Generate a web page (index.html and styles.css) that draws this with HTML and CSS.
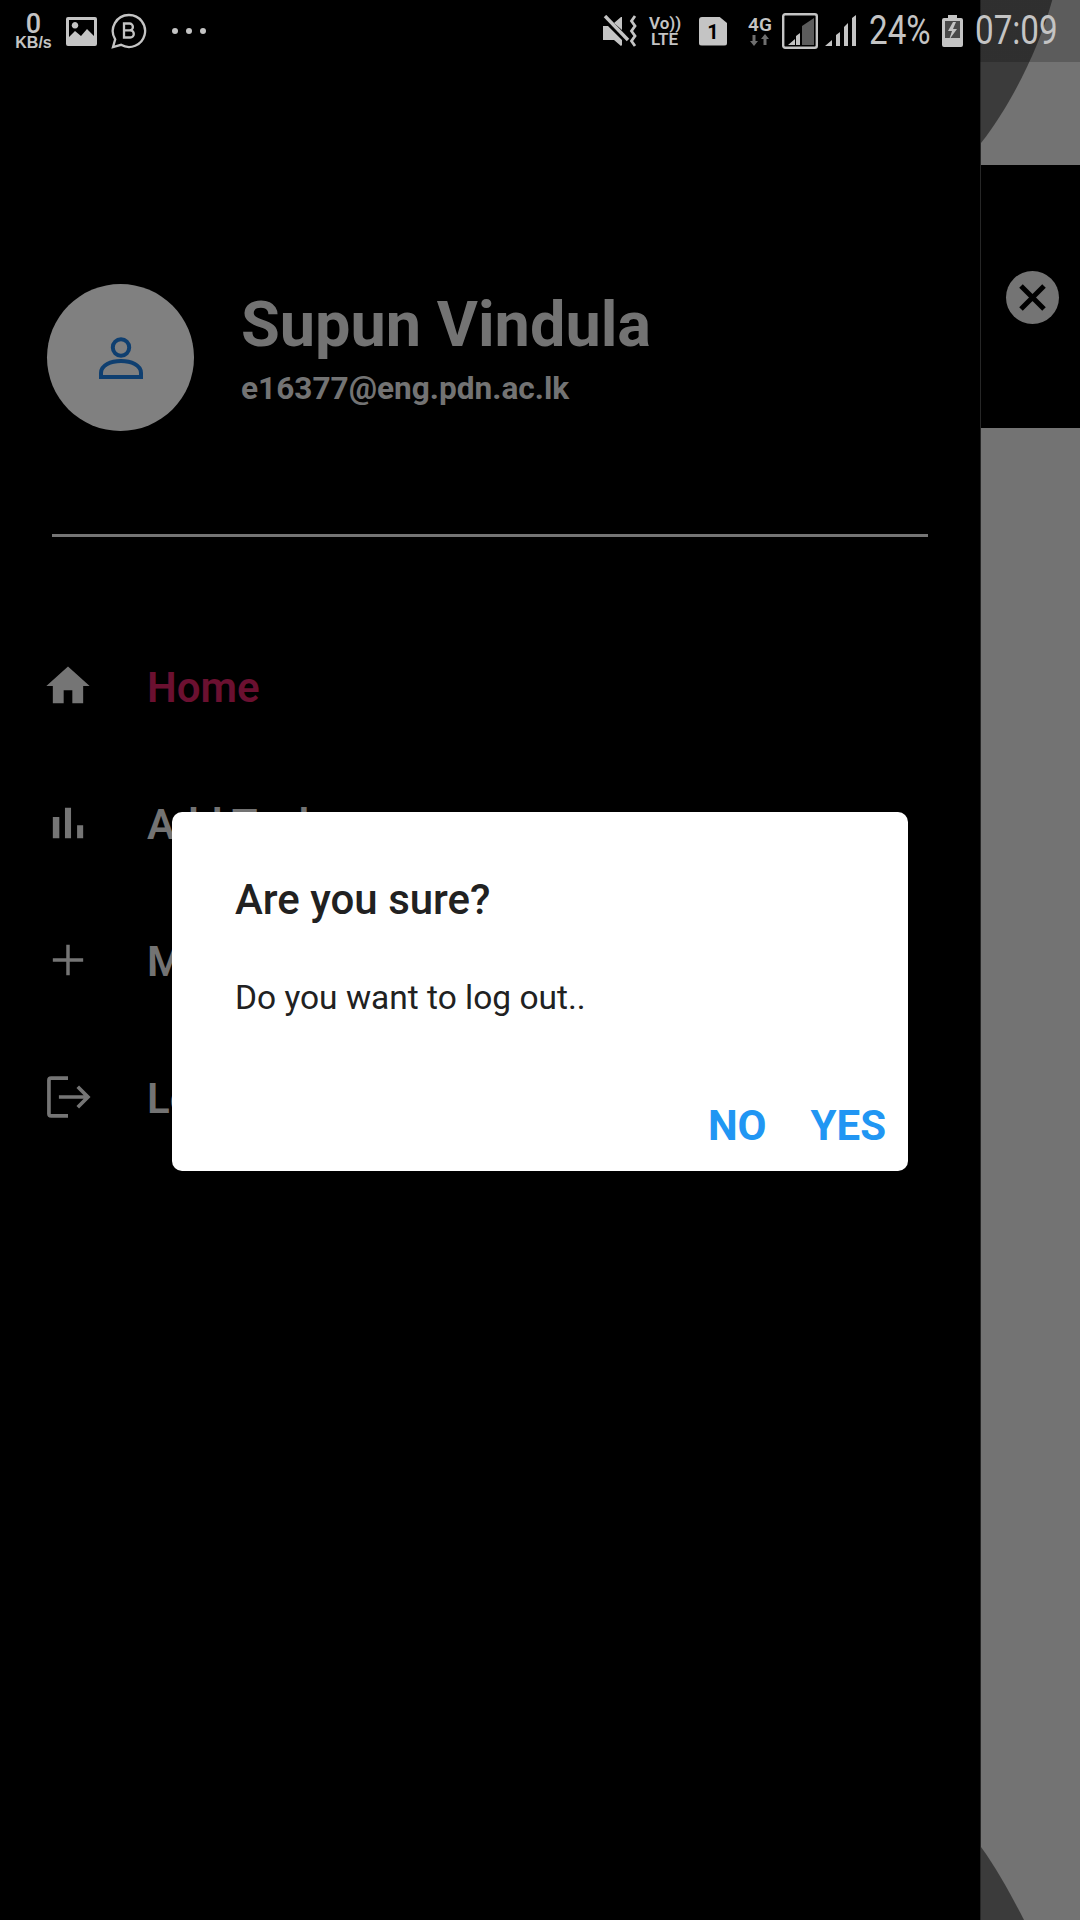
FILE: index.html
```html
<!DOCTYPE html>
<html lang="en">
<head>
    <meta charset="UTF-8">
    <meta name="viewport" content="width=device-width, initial-scale=1.0">
    <title>Log out dialog</title>
    <link rel="stylesheet" href="styles.css">
</head>
<body>
    <div class="screen">
        <main class="drawer">
            <section class="profile">
                <div class="avatar">
                    <svg class="avatar-icon" viewBox="0 0 44 42" fill="none" stroke="#0f3f70" stroke-width="4">
                        <circle cx="22" cy="10.500" r="8.200"/>
                        <path d="M2 40v-4C2 28 12 24 22 24s20 4 20 12v4z"/>
                    </svg>
                </div>
                <div class="who">
                    <h1>Supun Vindula</h1>
                    <p>e16377@eng.pdn.ac.lk</p>
                </div>
            </section>
            <hr class="divider">
            <ul class="menu">
                <li>
                    <svg viewBox="0 0 24 24" fill="#757575"><path d="M10 20v-6h4v6h5v-8h3L12 3 2 12h3v8z"/></svg>
                    <span class="active">Home</span>
                </li>
                <li>
                    <svg viewBox="0 0 24 24" fill="#757575"><path d="M5 9.200h3V19H5zM10.600 5h2.800v14h-2.800zm5.600 8H19v6h-2.800z"/></svg>
                    <span>Add Task</span>
                </li>
                <li>
                    <svg viewBox="0 0 24 24" fill="none" stroke="#757575" stroke-width="1.600"><path d="M5 12h14M12 5v14"/></svg>
                    <span>My Tasks</span>
                </li>
                <li>
                    <svg viewBox="0 0 24 24" fill="none" stroke="#757575" stroke-width="1.700"><path d="M12 3.300H4.200a1 1 0 0 0-1 1v15.400a1 1 0 0 0 1 1H12M7.800 12h13M16.500 7.300l4.700 4.700-4.700 4.700"/></svg>
                    <span>Logout</span>
                </li>
            </ul>
        </main>

        <aside class="peek">
            <div class="peek-top">
                <svg viewBox="0 0 100 165" preserveAspectRatio="none"><path d="M0 0h72C58 50 30 105 0 143z" fill="#3b3b3b"/></svg>
            </div>
            <div class="peek-band">
                <div class="close">
                    <svg viewBox="0 0 53 53" stroke="#000" stroke-width="5"><path d="M15 15l23 23M38 15L15 38"/></svg>
                </div>
            </div>
            <div class="peek-bottom">
                <svg viewBox="0 0 44 73"><path d="M0 0c16 22 30 48 43 73H0z" fill="#3b3b3b"/></svg>
            </div>
        </aside>

        <header class="status">
            <div class="status-left">
                <div class="speed"><b>0</b><small>KB/s</small></div>
                <svg class="ic-image" viewBox="0 0 31 29"><path fill="#c4c4c4" fill-rule="evenodd" d="M2 0h27a2 2 0 0 1 2 2v25a2 2 0 0 1-2 2H2a2 2 0 0 1-2-2V2a2 2 0 0 1 2-2zM3 3v17l6-6 6 5 6-7 7 7V3zM9 5a3.300 3.300 0 1 0 .01 0z"/></svg>
                <svg class="ic-biz" viewBox="0 0 36 36" fill="none" stroke="#c4c4c4" stroke-width="2.300">
                    <path d="M18 2a16 16 0 1 1-8 29.800L2 34l2.200-7.600A16 16 0 0 1 18 2z"/>
                    <path d="M13 10.500h5.500a3.400 3.400 0 0 1 0 6.800H13zM13 17.300h6.200a3.600 3.600 0 0 1 0 7.200H13z"/>
                </svg>
                <div class="dots"><i></i><i></i><i></i></div>
            </div>
            <div class="status-right">
                <svg class="ic-mute" viewBox="0 0 34 32" fill="#c4c4c4">
                    <path d="M0 11h5l14 14v5l-1 1-7-6H0zM11 8l7-6h1v13z"/>
                    <path d="M2 1l23 24" fill="none" stroke="#c4c4c4" stroke-width="3.400"/>
                    <path d="M32 1l-3.500 5 3.500 5-3.500 5 3.500 5-3.500 5 3.500 5" fill="none" stroke="#c4c4c4" stroke-width="2.800"/>
                </svg>
                <div class="volte">Vo))<br>LTE</div>
                <div class="sim">1</div>
                <div class="net">
                    <span>4G</span>
                    <svg viewBox="0 0 20 12" fill="#6f6f6f"><path d="M4 12L0 7h2.500V1h3v6H8zM15 0l4 5h-2.500v6h-3V5H11z"/></svg>
                </div>
                <svg class="ic-signal-box" viewBox="0 0 36 36">
                    <rect x="1.200" y="1.200" width="33.600" height="33.600" rx="2" fill="none" stroke="#c4c4c4" stroke-width="2.400"/>
                    <path d="M20 13L32 5v27H20z" fill="#5c5c5c"/>
                    <path d="M6 32l7-6v6zM14 32v-9l4-3v12z" fill="#c4c4c4"/>
                </svg>
                <svg class="ic-signal" viewBox="0 0 31 32" fill="#c4c4c4"><path d="M0 31l7-6v6zM11 31V20l4-3v14zM19 31V12l4-4v23zM27 31V3l4-3v31z"/></svg>
                <span class="pct">24%</span>
                <svg class="ic-batt" viewBox="0 0 21 32">
                    <path fill="#c4c4c4" d="M6 0h9v3h4a2 2 0 0 1 2 2v25a2 2 0 0 1-2 2H2a2 2 0 0 1-2-2V5a2 2 0 0 1 2-2h4z"/>
                    <path fill="#4a4a4a" d="M3 6h15v17H3z"/>
                    <path fill="#c4c4c4" d="M11 7L6 16h4l-3 9 8-11h-4l3-7z"/>
                </svg>
                <span class="time">07:09</span>
            </div>
        </header>

        <div class="dialog">
            <h2>Are you sure?</h2>
            <p>Do you want to log out..</p>
            <div class="actions">
                <button>NO</button>
                <button>YES</button>
            </div>
        </div>
    </div>
</body>
</html>
```

FILE: styles.css
```css
html,body{
    margin: 0;
    padding: 0;
    background: #000;
}

.screen{
    position: relative;
    display: flex;
    width: 1080px;
    height: 1920px;
    overflow: hidden;
    font-family: Roboto, "Liberation Sans", sans-serif;
}

/* drawer */
.drawer{
    width: 980px;
    padding-top: 284px;
    box-sizing: border-box;
}

.profile{
    display: flex;
    align-items: flex-start;
    padding-left: 47px;
}

.avatar{
    display: flex;
    align-items: center;
    justify-content: center;
    width: 147px;
    height: 147px;
    border-radius: 50%;
    background: #808080;
}

.avatar-icon{
    width: 44px;
    height: 42px;
}

.who{
    margin-left: 47px;
    padding-top: 3px;
    color: #737373;
}

.who h1{
    height: 76px;
    margin: 0;
    font-size: 63px;
    line-height: 76px;
    font-weight: 700;
}

.who p{
    margin: 7px 0 0;
    font-size: 31.6px;
    line-height: 38px;
    font-weight: 700;
}

.divider{
    height: 3px;
    margin: 103px 52px 0;
    border: 0;
    background: #757575;
}

.menu{
    margin: 80px 0 0;
    padding: 0;
    list-style: none;
}

.menu li{
    display: flex;
    align-items: center;
    height: 137px;
    padding-left: 42px;
    font-size: 42px;
    line-height: 52px;
    font-weight: 600;
    color: #737373;
}

.menu svg{
    width: 52px;
    height: 52px;
    margin-right: 53px;
}

.menu span{
    padding-top: 4px;
}

.menu .active{
    color: #6b1030;
}

/* bit of the page behind the drawer */
.peek{
    display: flex;
    flex-direction: column;
    flex: 1;
    border-left: 1px solid #262626;
}

.peek-top{
    height: 165px;
    background: #737373;
}

.peek-top svg{
    display: block;
    width: 100%;
    height: 100%;
}

.peek-band{
    display: flex;
    align-items: center;
    justify-content: center;
    box-sizing: border-box;
    height: 263px;
    padding: 2px 0 0 4px;
    background: #000;
}

.close{
    width: 53px;
    height: 53px;
    border-radius: 50%;
    background: #747474;
}

.close svg{
    display: block;
}

.peek-bottom{
    display: flex;
    align-items: flex-end;
    flex: 1;
    background: #737373;
}

.peek-bottom svg{
    display: block;
    width: 44px;
    height: 73px;
}

/* status bar */
.status{
    position: absolute;
    top: 0;
    left: 0;
    display: flex;
    justify-content: space-between;
    align-items: center;
    width: 100%;
    height: 62px;
    box-sizing: border-box;
    padding: 0 22px 0 15px;
    color: #c4c4c4;
    background: linear-gradient(to right, transparent 980px, rgba(0,0,0,.2) 980px);
}

.status-left,
.status-right{
    display: flex;
    align-items: center;
}

.speed{
    display: flex;
    flex-direction: column;
    align-items: center;
    width: 37px;
}

.speed b{
    font-size: 27px;
    line-height: 24px;
    font-weight: 500;
}

.speed small{
    font-family: "Liberation Sans", sans-serif;
    font-size: 16px;
    line-height: 14px;
    font-weight: 700;
}

.ic-image{
    width: 31px;
    height: 29px;
    margin-left: 14px;
}

.ic-biz{
    width: 36px;
    height: 36px;
    margin-left: 14px;
}

.dots{
    display: flex;
    gap: 8px;
    margin-left: 25px;
}

.dots i{
    width: 6px;
    height: 6px;
    border-radius: 50%;
    background: #c4c4c4;
}

.ic-mute{
    width: 34px;
    height: 32px;
}

.volte{
    width: 31px;
    margin-left: 12px;
    font-size: 17px;
    line-height: 16px;
    font-weight: 600;
    text-align: center;
}

.sim{
    width: 28px;
    height: 29px;
    margin-left: 19px;
    border-radius: 3px;
    clip-path: polygon(0 0, 72% 0, 100% 22%, 100% 100%, 0 100%);
    color: #000;
    background: #c4c4c4;
    font-size: 20px;
    line-height: 30px;
    font-weight: 700;
    text-align: center;
}

.net{
    display: flex;
    flex-direction: column;
    align-items: center;
    width: 24px;
    margin-left: 21px;
    font-size: 19px;
    line-height: 18px;
    font-weight: 600;
}

.net svg{
    width: 20px;
    height: 12px;
}

.ic-signal-box{
    width: 36px;
    height: 36px;
    margin-left: 10px;
}

.ic-signal{
    width: 31px;
    height: 32px;
    margin-left: 7px;
}

.pct,
.time{
    display: inline-block;
    font-size: 40px;
    font-weight: 400;
    line-height: 46px;
    transform-origin: left center;
    transform: scaleX(.83);
}

.pct{
    width: 60px;
    margin-left: 13px;
}

.ic-batt{
    width: 21px;
    height: 32px;
    margin-left: 13px;
}

.time{
    width: 83px;
    margin-left: 12px;
}

/* dialog */
.dialog{
    position: absolute;
    top: 812px;
    left: 172px;
    width: 736px;
    height: 359px;
    box-sizing: border-box;
    padding: 0 22px 0 63px;
    border-radius: 10px;
    background: #fff;
    color: #212121;
}

.dialog h2{
    margin: 0;
    padding-top: 63px;
    font-size: 42px;
    line-height: 50px;
    font-weight: 500;
}

.dialog p{
    margin: 0;
    padding-top: 50px;
    font-size: 33.5px;
    line-height: 46px;
    font-weight: 400;
}

.actions{
    display: flex;
    justify-content: flex-end;
    gap: 44px;
    margin-top: 80px;
}

.actions button{
    padding: 0;
    border: 0;
    background: none;
    color: #2196f3;
    font-family: inherit;
    font-size: 42px;
    line-height: 50px;
    font-weight: 700;
}
```
